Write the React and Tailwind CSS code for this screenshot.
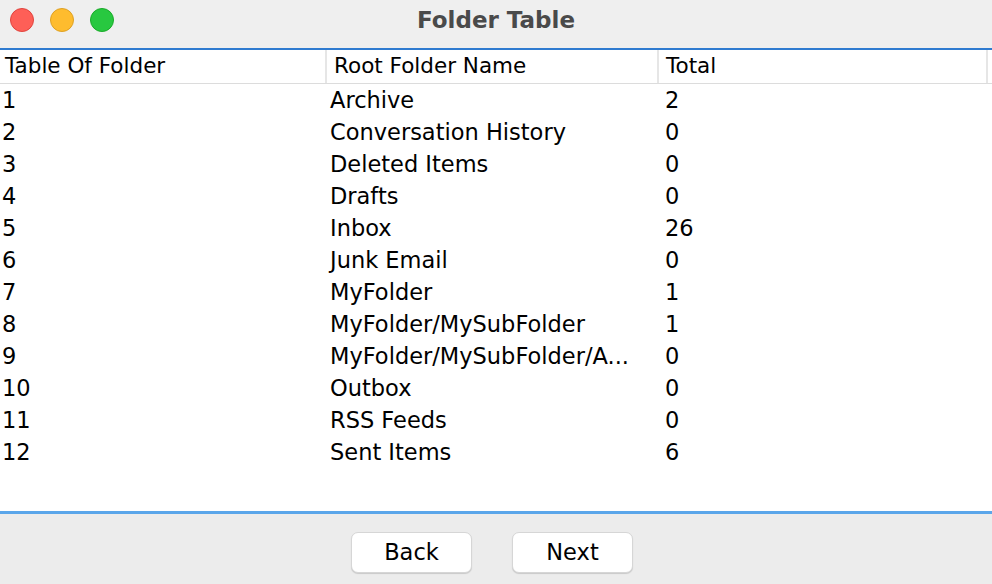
import React from "react";

const rows = [
  ["1", "Archive", "2"],
  ["2", "Conversation History", "0"],
  ["3", "Deleted Items", "0"],
  ["4", "Drafts", "0"],
  ["5", "Inbox", "26"],
  ["6", "Junk Email", "0"],
  ["7", "MyFolder", "1"],
  ["8", "MyFolder/MySubFolder", "1"],
  ["9", "MyFolder/MySubFolder/A...", "0"],
  ["10", "Outbox", "0"],
  ["11", "RSS Feeds", "0"],
  ["12", "Sent Items", "6"],
];

export default function App() {
  return (
    <div
      className="w-[992px] h-[584px] flex flex-col bg-[#ececec] overflow-hidden text-black"
      style={{ fontFamily: '"DejaVu Sans", "Noto Sans", sans-serif' }}
    >
      {/* Title bar */}
      <div className="relative h-[48px] shrink-0 bg-[#efefef] flex items-center justify-center pb-[8px]">
        <div className="absolute left-[10px] top-[8px] flex gap-[16px]">
          <span className="w-[24px] h-[24px] rounded-full bg-[#fe5f57] border border-[#e0443e]" />
          <span className="w-[24px] h-[24px] rounded-full bg-[#febc2e] border border-[#dea123]" />
          <span className="w-[24px] h-[24px] rounded-full bg-[#28c840] border border-[#1aab29]" />
        </div>
        <h1 className="text-[23px] font-bold text-[#4a4a4a] tracking-[0px]">Folder Table</h1>
      </div>
      <div className="h-[2px] shrink-0 bg-[#2f7bd0]" />

      {/* Table */}
      <div className="h-[461px] shrink-0 bg-white flex flex-col">
        <div className="h-[34px] shrink-0 flex border-b border-[#dcdcdc] text-[21.5px]">
          <div className="w-[327px] flex items-center pl-[5px] border-r-2 border-[#e6e6e6]">Table Of Folder</div>
          <div className="w-[332px] flex items-center pl-[7px] border-r-2 border-[#e6e6e6]">Root Folder Name</div>
          <div className="w-[329px] flex items-center pl-[7px] border-r-2 border-[#e6e6e6]">Total</div>
        </div>
        {rows.map((r) => (
          <div key={r[0]} className="h-[32px] shrink-0 flex items-center text-[22.5px] pt-[1px]">
            <div className="w-[327px] pl-[2px]">{r[0]}</div>
            <div className="w-[332px] pl-[3px]">{r[1]}</div>
            <div className="w-[329px] pl-[6px]">{r[2]}</div>
          </div>
        ))}
      </div>
      <div className="h-[3px] shrink-0 bg-[#5aa6ea]" />

      {/* Buttons */}
      <div className="flex-1 flex justify-center items-start pt-[18px] pr-[8px] gap-[40px]">
        <button className="w-[121px] h-[41px] rounded-[7px] bg-white border border-[#d6d6d6] shadow-[0_1px_1px_rgba(0,0,0,0.15)] text-[22.5px]">
          Back
        </button>
        <button className="w-[121px] h-[41px] rounded-[7px] bg-white border border-[#d6d6d6] shadow-[0_1px_1px_rgba(0,0,0,0.15)] text-[22.5px]">
          Next
        </button>
      </div>
    </div>
  );
}
